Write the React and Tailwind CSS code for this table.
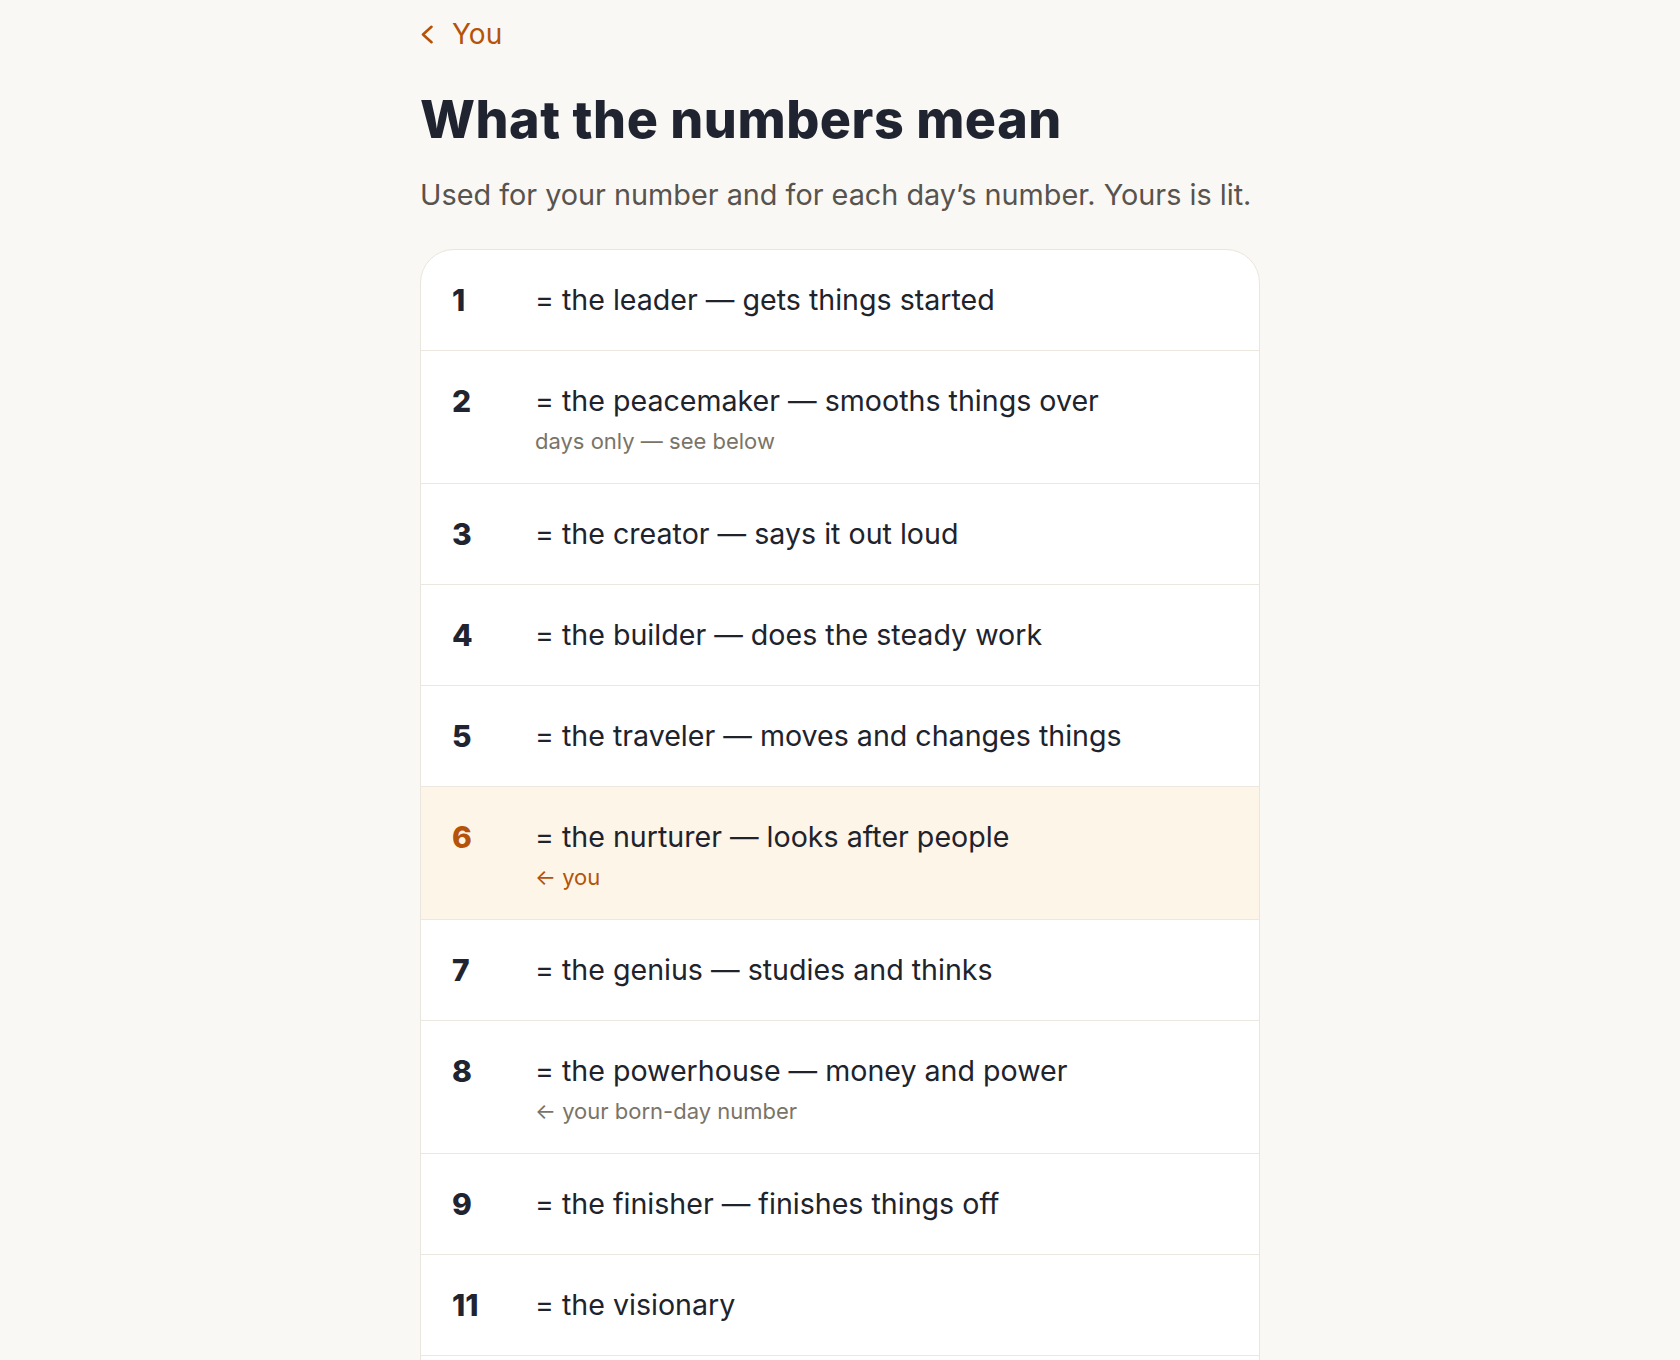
import React from 'react';

const rows = [
  { n: '1', text: '= the leader — gets things started' },
  { n: '2', text: '= the peacemaker — smooths things over', note: 'days only — see below' },
  { n: '3', text: '= the creator — says it out loud' },
  { n: '4', text: '= the builder — does the steady work' },
  { n: '5', text: '= the traveler — moves and changes things' },
  { n: '6', text: '= the nurturer — looks after people', note: '← you', lit: true },
  { n: '7', text: '= the genius — studies and thinks' },
  { n: '8', text: '= the powerhouse — money and power', note: '← your born-day number' },
  { n: '9', text: '= the finisher — finishes things off' },
  { n: '11', text: '= the visionary' },
  { n: '22', text: '= the master builder' },
  { n: '33', text: '= the master teacher' },
];

function BackChevron() {
  return (
    <svg width="14" height="19" viewBox="0 0 14 19" fill="none" className="shrink-0">
      <path d="M11.5 1.8 L3 9.5 L11.5 17.2" stroke="currentColor" strokeWidth="2.6" strokeLinecap="round" strokeLinejoin="round" />
    </svg>
  );
}

function NumberRow({ row, last }) {
  return (
    <div
      className={
        'flex items-start pl-[31px] pr-7 py-8 ' +
        (row.lit ? 'bg-[#fdf5e8] ' : '') +
        (last ? '' : 'border-b border-[#ece8e0]')
      }
    >
      <div
        className={
          'w-[83px] shrink-0 text-[30px] leading-9 font-extrabold ' +
          (row.lit ? 'text-[#b45309]' : 'text-[#1f2430]')
        }
      >
        {row.n}
      </div>
      <div className="flex flex-col">
        <div className="text-[28.6px] leading-9 text-[#20232c]">{row.text}</div>
        {row.note && (
          <div className={'mt-3 text-[22px] leading-5 ' + (row.lit ? 'text-[#b45309]' : 'text-[#7a7468]')}>
            {row.note}
          </div>
        )}
      </div>
    </div>
  );
}

export default function App() {
  return (
    <div className="min-h-screen bg-[#faf8f4] font-['Inter','Liberation_Sans',sans-serif]">
      <div className="mx-auto w-[840px] pt-4">
        <a href="#" className="flex items-center gap-[18px] text-[28px] leading-9 text-[#b45309]">
          <BackChevron />
          <span>You</span>
        </a>

        <h1 className="mt-[42px] text-[52px] leading-[52px] font-extrabold tracking-[0.01em] text-[#1f2430]">
          What the numbers mean
        </h1>
        <p className="mt-[31px] text-[28.8px] leading-9 text-[#57534e]">
          Used for your number and for each day’s number. Yours is lit.
        </p>

        <div className="mt-9 overflow-hidden rounded-t-[34px] border border-[#ebe6dd] bg-white">
          {rows.map((row, i) => (
            <NumberRow key={row.n} row={row} last={i === rows.length - 1} />
          ))}
        </div>
      </div>
    </div>
  );
}
